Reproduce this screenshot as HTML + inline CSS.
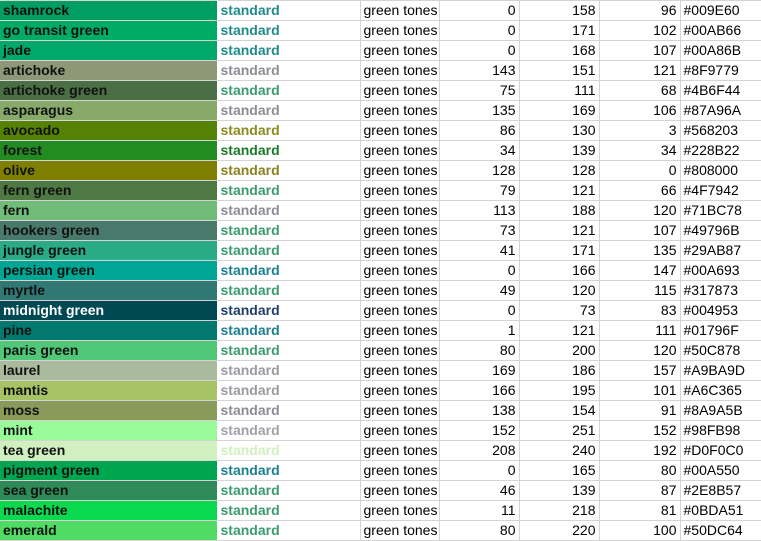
<!DOCTYPE html>
<html><head><style>
body{margin:0;width:761px;height:541px;overflow:hidden;background:#fff;font-family:"Liberation Sans",Arial,sans-serif;font-size:14px;}
table{border-collapse:collapse;table-layout:fixed;width:762px;border-top:1px solid #d4d4d4;}
tr{height:20px;}
td{height:19px;padding:0 3px;border-bottom:1px solid #d4d4d4;border-right:1px solid #d4d4d4;white-space:nowrap;overflow:hidden;line-height:19px;color:#000;}
td.a{font-weight:bold;color:#111;border-right:1px solid #fff;}
td.b{font-weight:bold;}
td.n{text-align:right;}
</style></head><body>
<table>
<colgroup><col style="width:217px"><col style="width:143px"><col style="width:79px"><col style="width:80px"><col style="width:80px"><col style="width:81px"><col style="width:82px"></colgroup>
<tr><td class="a" style="background:#009E60">shamrock</td><td class="b" style="color:#208A8A">standard</td><td>green tones</td><td class="n">0</td><td class="n">158</td><td class="n">96</td><td>#009E60</td></tr>
<tr><td class="a" style="background:#00AB66">go transit green</td><td class="b" style="color:#208A8A">standard</td><td>green tones</td><td class="n">0</td><td class="n">171</td><td class="n">102</td><td>#00AB66</td></tr>
<tr><td class="a" style="background:#00A86B">jade</td><td class="b" style="color:#208A8A">standard</td><td>green tones</td><td class="n">0</td><td class="n">168</td><td class="n">107</td><td>#00A86B</td></tr>
<tr><td class="a" style="background:#8F9779">artichoke</td><td class="b" style="color:#8C8C94">standard</td><td>green tones</td><td class="n">143</td><td class="n">151</td><td class="n">121</td><td>#8F9779</td></tr>
<tr><td class="a" style="background:#4B6F44">artichoke green</td><td class="b" style="color:#3A9A70">standard</td><td>green tones</td><td class="n">75</td><td class="n">111</td><td class="n">68</td><td>#4B6F44</td></tr>
<tr><td class="a" style="background:#87A96A">asparagus</td><td class="b" style="color:#8C8C94">standard</td><td>green tones</td><td class="n">135</td><td class="n">169</td><td class="n">106</td><td>#87A96A</td></tr>
<tr><td class="a" style="background:#568203">avocado</td><td class="b" style="color:#8A8A1E">standard</td><td>green tones</td><td class="n">86</td><td class="n">130</td><td class="n">3</td><td>#568203</td></tr>
<tr><td class="a" style="background:#228B22">forest</td><td class="b" style="color:#1A7A2A">standard</td><td>green tones</td><td class="n">34</td><td class="n">139</td><td class="n">34</td><td>#228B22</td></tr>
<tr><td class="a" style="background:#808000">olive</td><td class="b" style="color:#8A8020">standard</td><td>green tones</td><td class="n">128</td><td class="n">128</td><td class="n">0</td><td>#808000</td></tr>
<tr><td class="a" style="background:#4F7942">fern green</td><td class="b" style="color:#3A9A70">standard</td><td>green tones</td><td class="n">79</td><td class="n">121</td><td class="n">66</td><td>#4F7942</td></tr>
<tr><td class="a" style="background:#71BC78">fern</td><td class="b" style="color:#8C8C94">standard</td><td>green tones</td><td class="n">113</td><td class="n">188</td><td class="n">120</td><td>#71BC78</td></tr>
<tr><td class="a" style="background:#49796B">hookers green</td><td class="b" style="color:#3A9A70">standard</td><td>green tones</td><td class="n">73</td><td class="n">121</td><td class="n">107</td><td>#49796B</td></tr>
<tr><td class="a" style="background:#29AB87">jungle green</td><td class="b" style="color:#3A9A70">standard</td><td>green tones</td><td class="n">41</td><td class="n">171</td><td class="n">135</td><td>#29AB87</td></tr>
<tr><td class="a" style="background:#00A693">persian green</td><td class="b" style="color:#1A8090">standard</td><td>green tones</td><td class="n">0</td><td class="n">166</td><td class="n">147</td><td>#00A693</td></tr>
<tr><td class="a" style="background:#317873">myrtle</td><td class="b" style="color:#3A9A70">standard</td><td>green tones</td><td class="n">49</td><td class="n">120</td><td class="n">115</td><td>#317873</td></tr>
<tr><td class="a" style="background:#004953;color:#fff">midnight green</td><td class="b" style="color:#1F3F6A">standard</td><td>green tones</td><td class="n">0</td><td class="n">73</td><td class="n">83</td><td>#004953</td></tr>
<tr><td class="a" style="background:#01796F">pine</td><td class="b" style="color:#1A8090">standard</td><td>green tones</td><td class="n">1</td><td class="n">121</td><td class="n">111</td><td>#01796F</td></tr>
<tr><td class="a" style="background:#50C878">paris green</td><td class="b" style="color:#3A9A70">standard</td><td>green tones</td><td class="n">80</td><td class="n">200</td><td class="n">120</td><td>#50C878</td></tr>
<tr><td class="a" style="background:#A9BA9D">laurel</td><td class="b" style="color:#9A9AA0">standard</td><td>green tones</td><td class="n">169</td><td class="n">186</td><td class="n">157</td><td>#A9BA9D</td></tr>
<tr><td class="a" style="background:#A6C365">mantis</td><td class="b" style="color:#9A9AA0">standard</td><td>green tones</td><td class="n">166</td><td class="n">195</td><td class="n">101</td><td>#A6C365</td></tr>
<tr><td class="a" style="background:#8A9A5B">moss</td><td class="b" style="color:#8C8C94">standard</td><td>green tones</td><td class="n">138</td><td class="n">154</td><td class="n">91</td><td>#8A9A5B</td></tr>
<tr><td class="a" style="background:#98FB98">mint</td><td class="b" style="color:#A0A0A8">standard</td><td>green tones</td><td class="n">152</td><td class="n">251</td><td class="n">152</td><td>#98FB98</td></tr>
<tr><td class="a" style="background:#D0F0C0">tea green</td><td class="b" style="color:#D0F0C0">standard</td><td>green tones</td><td class="n">208</td><td class="n">240</td><td class="n">192</td><td>#D0F0C0</td></tr>
<tr><td class="a" style="background:#00A550">pigment green</td><td class="b" style="color:#1A8090">standard</td><td>green tones</td><td class="n">0</td><td class="n">165</td><td class="n">80</td><td>#00A550</td></tr>
<tr><td class="a" style="background:#2E8B57">sea green</td><td class="b" style="color:#3A9A70">standard</td><td>green tones</td><td class="n">46</td><td class="n">139</td><td class="n">87</td><td>#2E8B57</td></tr>
<tr><td class="a" style="background:#0BDA51">malachite</td><td class="b" style="color:#3A9A70">standard</td><td>green tones</td><td class="n">11</td><td class="n">218</td><td class="n">81</td><td>#0BDA51</td></tr>
<tr><td class="a" style="background:#50DC64">emerald</td><td class="b" style="color:#3A9A70">standard</td><td>green tones</td><td class="n">80</td><td class="n">220</td><td class="n">100</td><td>#50DC64</td></tr>
</table>
</body></html>
